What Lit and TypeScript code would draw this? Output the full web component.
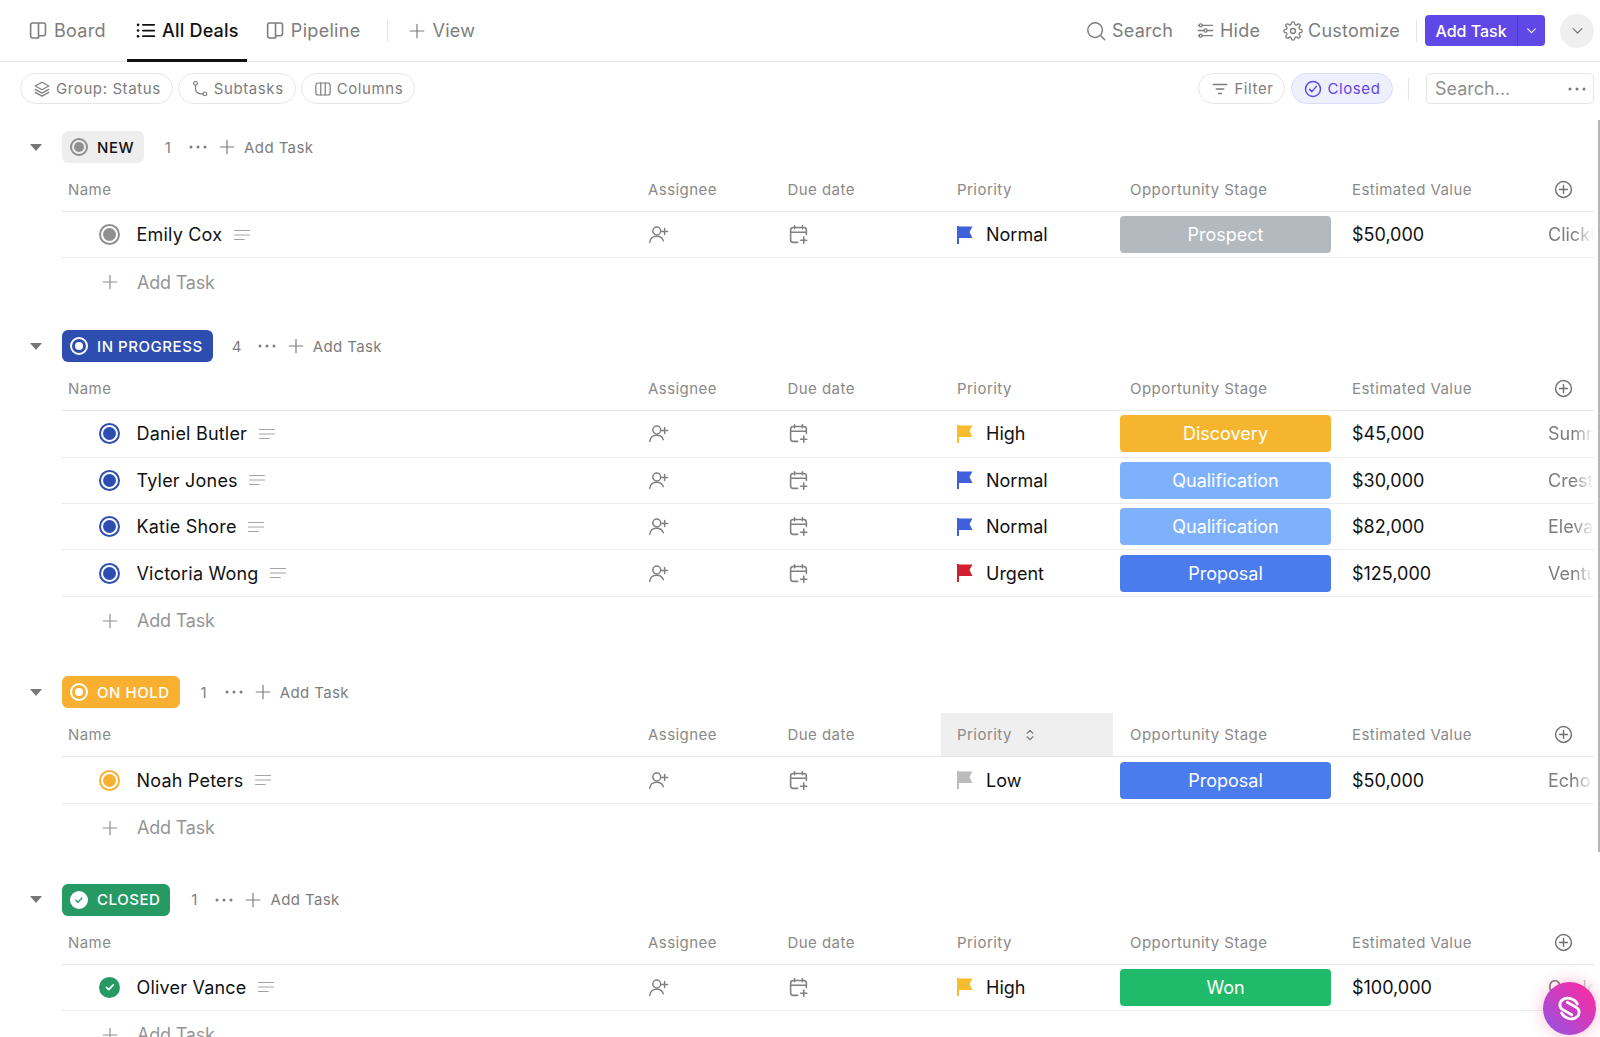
import { LitElement, html, css, svg } from 'lit'
import { customElement } from 'lit/decorators.js'

type Row = { name: string, flag: string, stage: string, value: string, note: string }
type Group = { key: string, label: string, rows: Row[], hot?: boolean }

const groups: Group[] = [
  { key: 'new', label: 'NEW', rows: [
    { name: 'Emily Cox', flag: 'Normal', stage: 'Prospect', value: '$50,000', note: 'ClickUp' }
  ] },
  { key: 'progress', label: 'IN PROGRESS', rows: [
    { name: 'Daniel Butler', flag: 'High', stage: 'Discovery', value: '$45,000', note: 'Summit' },
    { name: 'Tyler Jones', flag: 'Normal', stage: 'Qualification', value: '$30,000', note: 'Crestline' },
    { name: 'Katie Shore', flag: 'Normal', stage: 'Qualification', value: '$82,000', note: 'Elevate' },
    { name: 'Victoria Wong', flag: 'Urgent', stage: 'Proposal', value: '$125,000', note: 'Venture' }
  ] },
  { key: 'hold', label: 'ON HOLD', hot: true, rows: [
    { name: 'Noah Peters', flag: 'Low', stage: 'Proposal', value: '$50,000', note: 'Echo Labs' }
  ] },
  { key: 'closed', label: 'CLOSED', rows: [
    { name: 'Oliver Vance', flag: 'High', stage: 'Won', value: '$100,000', note: 'Ocelot' }
  ] }
]

const icon = (size: number, body: unknown, sw = 1.6) => html`<svg class="ico" width=${size} height=${size} viewBox="0 0 24 24" fill="none" stroke="currentColor" stroke-width=${sw} stroke-linecap="round" stroke-linejoin="round">${body}</svg>`

const book = () => icon(21, svg`<path d="M12 4v16M5 3.500h12.500a2.500 2.500 0 0 1 2.500 2.500v9.500a2.500 2.500 0 0 1-2.500 2.500H12v2.500H5.500A2.500 2.500 0 0 1 3 18V5.500a2 2 0 0 1 2-2z"/>`, 1.800)
const list = () => icon(21, svg`<path d="M9 5.500h13M9 12h13M9 18.500h13" stroke-width="2"/><circle cx="3.500" cy="5.500" r="1.500" fill="currentColor" stroke="none"/><circle cx="3.500" cy="12" r="1.500" fill="currentColor" stroke="none"/><circle cx="3.500" cy="18.500" r="1.500" fill="currentColor" stroke="none"/>`)
const plus = (s = 18) => icon(s, svg`<path d="M12 3v18M3 12h18"/>`)
const search = () => icon(22, svg`<circle cx="11" cy="11" r="8"/><path d="M17 17l4.500 4.500"/>`)
const sliders = () => icon(19, svg`<path d="M8 5.500h13M3 5.500h1M14 12h7M3 12h7M8 18.500h13M3 18.500h1"/><circle cx="6" cy="5.500" r="2"/><circle cx="12" cy="12" r="2"/><circle cx="6" cy="18.500" r="2"/>`)
const gear = () => icon(20, svg`<circle cx="12" cy="12" r="3"/><path d="M19.400 15a1.700 1.700 0 0 0 .3 1.800l.1.100a2 2 0 1 1-2.800 2.800l-.1-.1a1.700 1.700 0 0 0-2.900 1.200V21a2 2 0 1 1-4 0v-.1a1.700 1.700 0 0 0-2.900-1.200l-.1.100a2 2 0 1 1-2.800-2.800l.1-.1a1.700 1.700 0 0 0-1.200-2.900H3a2 2 0 1 1 0-4h.1a1.700 1.700 0 0 0 1.200-2.900l-.1-.1a2 2 0 1 1 2.800-2.800l.1.100a1.700 1.700 0 0 0 1.900.3h.1a1.700 1.700 0 0 0 .9-1.500V3a2 2 0 1 1 4 0v.1a1.700 1.700 0 0 0 2.900 1.200l.1-.1a2 2 0 1 1 2.800 2.800l-.1.100a1.700 1.700 0 0 0-.3 1.900v.1a1.700 1.700 0 0 0 1.500.9H21a2 2 0 1 1 0 4h-.1a1.700 1.700 0 0 0-1.500.9z"/>`)
const chevron = (s = 14) => icon(s, svg`<path d="M5 9l7 7 7-7"/>`, 2)
const layers = () => icon(18, svg`<path d="M12 3l9 5-9 5-9-5zM3 12.500l9 5 9-5M3 16.500l9 5 9-5"/>`)
const subtasks = () => icon(18, svg`<circle cx="6" cy="4.500" r="2.500"/><circle cx="18.500" cy="18.500" r="2.500"/><path d="M6 7v4a7 7 0 0 0 7 7.500h3"/>`)
const columns = () => icon(18, svg`<rect x="2.500" y="4" width="19" height="16" rx="3"/><path d="M9 4v16M15 4v16"/>`)
const filter = () => icon(18, svg`<path d="M3 6h18M7 12h10M10 18h4"/>`, 1.800)
const checkCircle = () => icon(18, svg`<circle cx="12" cy="12" r="10"/><path d="M7.500 12.500l3 3 6-7"/>`, 2)
const lines = () => icon(18, svg`<path d="M2 6h20M2 12h20M2 18h13"/>`, 1.500)
const addUser = () => icon(21, svg`<circle cx="10" cy="8" r="4.500"/><path d="M2 21c.5-4.500 3.500-7 8-7s6.500 2 7.500 5M19 5v7M15.500 8.500h7"/>`, 1.700)
const calendar = () => icon(21, svg`<path d="M11 21H6a3 3 0 0 1-3-3V7a3 3 0 0 1 3-3h12a3 3 0 0 1 3 3v5M3 9.500h18M7.500 2v3.500M16.500 2v3.500M18 15v7M14.500 18.500h7"/>`, 1.800)
const circlePlus = () => icon(19, svg`<circle cx="12" cy="12" r="10"/><path d="M12 7v10M7 12h10"/>`, 1.800)
const sortArrows = () => icon(14, svg`<path d="M7 9l5-5 5 5M7 15l5 5 5-5"/>`, 2)
const dots = () => html`<svg class="ico" width="18" height="4" viewBox="0 0 18 4" fill="currentColor"><circle cx="2" cy="2" r="1.500"/><circle cx="9" cy="2" r="1.500"/><circle cx="16" cy="2" r="1.500"/></svg>`
const flagIcon = () => html`<svg class="ico" width="16" height="18" viewBox="0 0 16 18" fill="currentColor"><path d="M0 0h2v18H0z"/><path d="M2 .5h13.500L12.500 6l3 6H2z"/></svg>`
const statusCheck = (s: number) => html`<svg class="ico" width=${s} height=${s} viewBox="0 0 20 20" fill="none" stroke="currentColor" stroke-width="2" stroke-linecap="round" stroke-linejoin="round"><path d="M5.500 10.500l3 2.800 5.500-6"/></svg>`

@customElement('app-root')
export class AppRoot extends LitElement {
  renderStatus (key: string, cls: string) {
    const size = cls === 'dot-row' ? 16 : 14
    return html`<span class="dot ${cls} st-${key}">${key === 'closed' ? statusCheck(size) : html`<i></i>`}</span>`
  }

  renderRow (g: Group, r: Row) {
    return html`
      <div class="grid row">
        <div class="name">
          ${this.renderStatus(g.key, 'dot-row')}
          <span class="who">${r.name}</span>
          <span class="desc">${lines()}</span>
        </div>
        <div class="c-assign mute">${addUser()}</div>
        <div class="c-due mute">${calendar()}</div>
        <div class="c-prio"><span class="flag f-${r.flag.toLowerCase()}">${flagIcon()}</span>${r.flag}</div>
        <div class="c-stage"><span class="stage s-${r.stage.toLowerCase()}">${r.stage}</span></div>
        <div class="c-val">${r.value}</div>
        <div class="c-note"><span>${r.note}</span></div>
      </div>
    `
  }

  renderGroup (g: Group) {
    return html`
      <section class="group">
        <div class="ghead">
          <svg class="caret" width="12" height="7" viewBox="0 0 12 7" fill="currentColor"><path d="M0 0h12L6 7z"/></svg>
          <span class="badge b-${g.key}">${this.renderStatus(g.key, 'dot-badge')}${g.label}</span>
          <span class="count">${g.rows.length}</span>
          <span class="gdots">${dots()}</span>
          <span class="gadd">${plus(18)}Add Task</span>
        </div>
        <div class="grid thead">
          <div class="th-name">Name</div>
          <div class="c-assign">Assignee</div>
          <div class="c-due">Due date</div>
          <div class="th-prio ${g.hot ? 'hot' : ''}">Priority${g.hot ? html`<span class="sort">${sortArrows()}</span>` : ''}</div>
          <div class="th-stage">Opportunity Stage</div>
          <div class="c-val">Estimated Value</div>
          <div class="th-plus">${circlePlus()}</div>
        </div>
        ${g.rows.map(r => this.renderRow(g, r))}
        <div class="addrow"><span class="addplus">${plus(18)}</span>Add Task</div>
      </section>
    `
  }

  render () {
    return html`
      <header class="top">
        <nav class="tabs">
          <a class="tab">${book()}Board</a>
          <a class="tab on">${list()}All Deals</a>
          <a class="tab">${book()}Pipeline</a>
          <span class="sep"></span>
          <a class="tab view">${plus(18)}View</a>
        </nav>
        <div class="actions">
          <a class="act">${search()}Search</a>
          <a class="act">${sliders()}Hide</a>
          <a class="act">${gear()}Customize</a>
          <span class="sep tall"></span>
          <div class="addbtn"><span class="addmain">Add Task</span><span class="addmore">${chevron(13)}</span></div>
          <span class="round">${chevron(15)}</span>
        </div>
      </header>
      <div class="filters">
        <div class="pills">
          <span class="pill">${layers()}Group: Status</span>
          <span class="pill">${subtasks()}Subtasks</span>
          <span class="pill">${columns()}Columns</span>
        </div>
        <div class="pills right">
          <span class="pill">${filter()}Filter</span>
          <span class="pill active">${checkCircle()}Closed</span>
          <span class="sep short"></span>
          <div class="searchbox"><span>Search...</span>${dots()}</div>
        </div>
      </div>
      <main class="groups">${groups.map(g => this.renderGroup(g))}</main>
      <span class="scroll"></span>
      <span class="fab">
        <svg width="27" height="27" viewBox="0 0 24 24" fill="none" stroke="#fff" stroke-width="2.500" stroke-linecap="round" stroke-linejoin="round">
          <path d="M19 8C17 3.500 10.500 1.500 6.500 3.800 2.500 6 2.500 11 6 13l8 4.500"/>
          <path d="M5 16c2 4.500 8.500 6.500 12.500 4.200 4-2.200 4-7.200.5-9.200l-8-4.500"/>
        </svg>
      </span>
    `
  }

  static styles = css`
    :host {
      display: block;
      position: relative;
      height: 1037px;
      overflow: hidden;
      background: #fff;
      font-family: Inter, "Noto Sans", sans-serif;
      color: #111;
    }

    .ico { display: block; flex: none; }

    .top {
      height: 62px;
      box-sizing: border-box;
      border-bottom: 1px solid #e4e4e4;
      display: flex;
      justify-content: space-between;
      align-items: center;
      padding: 0 6px 0 0;
    }

    .tabs { display: flex; align-items: stretch; height: 62px; padding-left: 18px; }

    .tab {
      display: flex;
      align-items: center;
      gap: 5px;
      padding: 0 10px;
      font-size: 18px;
      letter-spacing: .3px;
      color: #7d7d7d;
      margin-right: 1px;
      white-space: nowrap;
    }

    .tab.on {
      color: #111;
      font-weight: 500;
      letter-spacing: .2px;
      gap: 6px;
      padding: 3px 0 0;
      border-bottom: 3px solid #111;
      height: 62px;
      box-sizing: border-box;
      margin: 0 8px 0 10px;
      width: 120px;
      justify-content: center;
    }

    .tab.view { padding: 0; gap: 6px; }
    .sep { width: 1px; background: #e6e6e6; flex: none; }
    .tabs .sep { height: 22px; align-self: center; margin: 0 20px 0 16px; }

    .actions { display: flex; align-items: center; }
    .act { display: flex; align-items: center; gap: 5px; font-size: 18px; letter-spacing: .2px; color: #7d7d7d; margin-right: 23px; }
    .sep.tall { height: 22px; margin: 0 8px 0 -7px; }

    .addbtn {
      display: flex;
      height: 31px;
      width: 120px;
      background: #5f48e6;
      border-radius: 4px;
      color: #fff;
      font-size: 16px;
      font-weight: 500;
      align-items: stretch;
    }

    .addmain { flex: 1; display: flex; align-items: center; justify-content: center; border-right: 1px solid #4f39cc; }
    .addmore { width: 27px; display: flex; align-items: center; justify-content: center; }

    .round {
      width: 34px;
      height: 34px;
      border-radius: 50%;
      background: #efefef;
      color: #777;
      display: flex;
      align-items: center;
      justify-content: center;
      margin-left: 15px;
    }

    .filters {
      display: flex;
      justify-content: space-between;
      align-items: center;
      padding: 11px 6px 0 20px;
    }

    .pills { display: flex; align-items: center; gap: 5px; }
    .pills.right { gap: 6px; }

    .pill {
      height: 31px;
      box-sizing: border-box;
      border: 1px solid #e6e6e6;
      border-radius: 16px;
      display: flex;
      align-items: center;
      gap: 5px;
      padding: 0 11px 0 12px;
      font-size: 15px;
      letter-spacing: .6px;
      color: #7d7d7d;
    }

    .pill.active { background: #eeefff; border-color: #dcdcfa; color: #5f48e6; }
    .sep.short { height: 22px; margin: 0 11px 0 9.500px; }

    .searchbox {
      width: 168px;
      height: 31px;
      box-sizing: border-box;
      border: 1px solid #e6e6e6;
      border-radius: 5px;
      display: flex;
      align-items: center;
      justify-content: space-between;
      padding: 0 7px 0 8px;
      font-size: 18px;
      color: #8f8f8f;
    }

    .searchbox svg { color: #777; }

    .groups { padding-top: 27px; }
    .group { margin-bottom: 31.750px; }
    .group:first-child { margin-bottom: 23.750px; }

    .ghead { display: flex; align-items: center; height: 32px; padding-left: 30px; color: #7d7d7d; font-size: 15px; letter-spacing: .4px; }
    .caret { margin-right: 20px; color: #777; flex: none; }

    .badge {
      height: 32px;
      box-sizing: border-box;
      display: flex;
      align-items: center;
      gap: 9px;
      padding: 0 10px 0 8px;
      border-radius: 6px;
      font-size: 15px;
      font-weight: 500;
      letter-spacing: .55px;
      color: #fff;
    }

    .b-new { background: #eeeeee; color: #111; }
    .b-progress { background: #2d4eb0; }
    .b-hold { background: #f9b031; }
    .b-closed { background: #279a63; }

    .count { margin-left: 18px; width: 12px; text-align: center; font-size: 15px; }
    .gdots { margin-left: 15px; }
    .gadd { display: flex; align-items: center; gap: 8px; margin-left: 11px; }

    .dot {
      box-sizing: border-box;
      border-radius: 50%;
      display: flex;
      align-items: center;
      justify-content: center;
      flex: none;
    }

    .dot i { display: block; border-radius: 50%; background: currentColor; }
    .dot-badge { width: 18px; height: 18px; border: 2px solid; }
    .dot-badge i { width: 8px; height: 8px; }
    .dot-row { width: 21px; height: 21px; border: 2px solid; }
    .dot-row i { width: 13px; height: 13px; }

    .dot-row.st-new { color: #8f8f8f; }
    .dot-row.st-progress { color: #2d4eb0; }
    .dot-row.st-hold { color: #f9b031; }
    .dot-row.st-closed { background: #279a63; border-color: #279a63; color: #fff; }

    .dot-badge.st-new { color: #8f8f8f; }
    .dot-badge.st-new i { width: 10px; height: 10px; }
    .dot-badge.st-progress { color: #fff; }
    .dot-badge.st-hold { color: #fff; }
    .dot-badge.st-closed { background: #fff; border-color: #fff; color: #279a63; }

    .grid {
      display: grid;
      grid-template-columns: 580px 139px 160px 172px 225px 210px 46px;
      margin-left: 62px;
      width: 1532px;
      align-items: center;
    }

    .thead {
      margin-top: 5px;
      height: 44px;
      box-sizing: border-box;
      border-bottom: 1px solid #e8e8e8;
      font-size: 15px;
      letter-spacing: .45px;
      color: #8a8a8a;
    }

    .thead > div { height: 43px; display: flex; align-items: center; box-sizing: border-box; }
    .th-name { padding-left: 6px; }
    .c-assign, .c-due { padding-left: 6px; }
    .c-due { padding-left: 7px; }
    .thead .c-due { padding-left: 6.500px; }
    .th-prio { padding-left: 16px; }
    .th-prio.hot { background: #efefef; }
    .sort { margin-left: 11px; color: #777; }
    .th-stage { padding-left: 17px; }
    .c-val { padding-left: 14px; }
    .th-plus { padding-left: 6px; color: #707070; }

    .row {
      height: 46.400px;
      box-sizing: border-box;
      border-bottom: 1.500px solid #ececec;
      font-size: 18px;
    }

    .name { display: flex; align-items: center; padding-left: 37px; gap: 16.500px; }
    .who { letter-spacing: .2px; }
    .desc { color: #a3a3a3; margin-left: -6px; }
    .mute { color: #808080; }
    .c-prio { display: flex; align-items: center; gap: 13px; padding-left: 16px; }
    .flag { display: block; }
    .f-normal { color: #3f5fdc; }
    .f-high { color: #f8bd2e; }
    .f-urgent { color: #d01f2e; }
    .f-low { color: #bcbcbc; }

    .c-stage { padding-left: 7px; }

    .stage {
      display: flex;
      align-items: center;
      justify-content: center;
      width: 211px;
      height: 37px;
      border-radius: 4px;
      color: #fff;
    }

    .s-prospect { background: #b2b9bf; }
    .s-discovery { background: #f6b52f; }
    .s-qualification { background: #7eb0fb; }
    .s-proposal { background: #4a7cee; }
    .s-won { background: #1fbb6a; }

    .c-note {
      overflow: hidden;
      white-space: nowrap;
      color: #7d7d7d;
      -webkit-mask-image: linear-gradient(90deg, #000 55%, transparent 100%);
      mask-image: linear-gradient(90deg, #000 55%, transparent 100%);
    }

    .addrow {
      height: 48px;
      display: flex;
      align-items: center;
      padding-left: 101px;
      gap: 18px;
      font-size: 18px;
      letter-spacing: -.2px;
      color: #959595;
    }

    .addplus { color: #8f8f8f; }

    .scroll {
      position: absolute;
      right: 0;
      top: 120px;
      width: 2px;
      height: 732px;
      background: #b5b5b5;
    }

    .fab {
      position: absolute;
      left: 1543px;
      top: 982px;
      width: 53px;
      height: 53px;
      border-radius: 50%;
      background: linear-gradient(45deg, #8f55e6 0%, #f42ea6 85%);
      box-shadow: 0 0 16px rgba(240, 60, 140, .35);
      display: flex;
      align-items: center;
      justify-content: center;
    }
  `
}
